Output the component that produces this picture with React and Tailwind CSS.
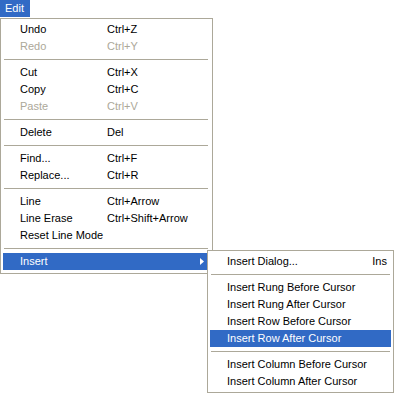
import React from 'react';

const mainItems = [
  { label: 'Undo', key: 'Ctrl+Z' },
  { label: 'Redo', key: 'Ctrl+Y', disabled: true },
  { sep: true },
  { label: 'Cut', key: 'Ctrl+X' },
  { label: 'Copy', key: 'Ctrl+C' },
  { label: 'Paste', key: 'Ctrl+V', disabled: true },
  { sep: true },
  { label: 'Delete', key: 'Del' },
  { sep: true },
  { label: 'Find...', key: 'Ctrl+F' },
  { label: 'Replace...', key: 'Ctrl+R' },
  { sep: true },
  { label: 'Line', key: 'Ctrl+Arrow' },
  { label: 'Line Erase', key: 'Ctrl+Shift+Arrow' },
  { label: 'Reset Line Mode', key: '' },
  { sep: true },
  { label: 'Insert', sub: true, active: true },
];

const subItems = [
  { label: 'Insert Dialog...', key: 'Ins' },
  { sep: true },
  { label: 'Insert Rung Before Cursor' },
  { label: 'Insert Rung After Cursor' },
  { label: 'Insert Row Before Cursor' },
  { label: 'Insert Row After Cursor', active: true },
  { sep: true },
  { label: 'Insert Column Before Cursor' },
  { label: 'Insert Column After Cursor' },
];

function Separator() {
  return (
    <div className="h-[9px] flex items-center px-[1px]">
      <div className="h-px w-full bg-[#aca899]" />
    </div>
  );
}

function MainRow({ item }) {
  const color = item.active ? 'bg-[#316ac5] text-white' : item.disabled ? 'text-[#aca899]' : 'text-black';
  return (
    <div className={`h-[17px] flex items-center pl-[17px] pr-[4px] whitespace-nowrap ${color}`}>
      <span className="w-[87px]">{item.label}</span>
      <span className="flex-1">{item.key}</span>
      {item.sub && (
        <svg width="4" height="7" viewBox="0 0 4 7" className="mr-[1px]">
          <path d="M0 0 L4 3.5 L0 7 Z" fill="white" />
        </svg>
      )}
    </div>
  );
}

function SubRow({ item }) {
  const color = item.active ? 'bg-[#316ac5] text-white' : 'text-black';
  return (
    <div className={`h-[17px] flex items-center justify-between pl-[17px] pr-[4px] whitespace-nowrap ${color}`}>
      <span>{item.label}</span>
      {item.key && <span>{item.key}</span>}
    </div>
  );
}

export default function App() {
  return (
    <div className="relative w-[394px] h-[393px] bg-white overflow-hidden text-[11px] leading-none font-['Liberation_Sans',Arial,sans-serif]">
      <div className="w-[30px] h-[17px] bg-[#316ac5] text-white flex items-center pl-[5px]">Edit</div>

      <div className="mt-[1px] w-[213px] border border-[#aca899] bg-white pt-[2px] pb-[3px] pl-[2px] pr-[3px]">
        {mainItems.map((item, i) => (item.sep ? <Separator key={i} /> : <MainRow key={i} item={item} />))}
      </div>

      {/* Insert submenu */}
      <div className="absolute left-[207px] top-[250px] w-[187px] border border-[#aca899] bg-white p-[2px]">
        {subItems.map((item, i) => (item.sep ? <Separator key={i} /> : <SubRow key={i} item={item} />))}
      </div>
    </div>
  );
}
